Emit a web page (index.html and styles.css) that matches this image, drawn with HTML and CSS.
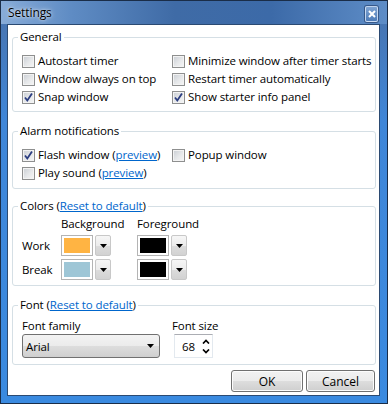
FILE: index.html
```html
<!DOCTYPE html>
<html lang="en">
<head>
  <meta charset="UTF-8" />
  <title>Settings</title>
  <link rel="stylesheet" href="styles.css">
</head>
<body>

<div class="window">
  <div class="titlebar">
    <span class="title">Settings</span>
    <span class="close">
      <svg width="8" height="8" viewBox="0 0 8 8"><path d="M1 1 L7 7 M7 1 L1 7" stroke="#fff" stroke-width="2" /></svg>
    </span>
  </div>

  <div class="client">

    <fieldset class="group general">
      <legend>General</legend>
      <div class="cols">
        <label class="check"><span class="box"></span>Autostart timer</label>
        <label class="check"><span class="box"></span>Minimize window after timer starts</label>
        <label class="check"><span class="box"></span>Window always on top</label>
        <label class="check"><span class="box"></span>Restart timer automatically</label>
        <label class="check"><span class="box on"><svg width="11" height="11" viewBox="0 0 11 11"><path d="M2 5.5 L4.3 8.5 L9 1.5" fill="none" stroke="#2b3d80" stroke-width="1.8" /></svg></span>Snap window</label>
        <label class="check"><span class="box on"><svg width="11" height="11" viewBox="0 0 11 11"><path d="M2 5.5 L4.3 8.5 L9 1.5" fill="none" stroke="#2b3d80" stroke-width="1.8" /></svg></span>Show starter info panel</label>
      </div>
    </fieldset>

    <fieldset class="group alarm">
      <legend>Alarm notifications</legend>
      <div class="cols">
        <label class="check"><span class="box on"><svg width="11" height="11" viewBox="0 0 11 11"><path d="M2 5.5 L4.3 8.5 L9 1.5" fill="none" stroke="#2b3d80" stroke-width="1.8" /></svg></span>Flash window (<a href="#">preview</a>)</label>
        <label class="check"><span class="box"></span>Popup window</label>
        <label class="check"><span class="box"></span>Play sound (<a href="#">preview</a>)</label>
      </div>
    </fieldset>

    <fieldset class="group colors">
      <legend>Colors (<a href="#">Reset to default</a>)</legend>
      <div class="color-grid">
        <span></span>
        <span class="head">Background</span>
        <span class="head">Foreground</span>

        <span class="row-label">Work</span>
        <div class="picker">
          <span class="swatch"><span class="fill orange"></span></span>
          <span class="drop"><svg width="7" height="4" viewBox="0 0 7 4"><path d="M0 0 H7 L3.5 4 Z" fill="#000" /></svg></span>
        </div>
        <div class="picker">
          <span class="swatch"><span class="fill black"></span></span>
          <span class="drop"><svg width="7" height="4" viewBox="0 0 7 4"><path d="M0 0 H7 L3.5 4 Z" fill="#000" /></svg></span>
        </div>

        <span class="row-label">Break</span>
        <div class="picker">
          <span class="swatch"><span class="fill blue"></span></span>
          <span class="drop"><svg width="7" height="4" viewBox="0 0 7 4"><path d="M0 0 H7 L3.5 4 Z" fill="#000" /></svg></span>
        </div>
        <div class="picker">
          <span class="swatch"><span class="fill black"></span></span>
          <span class="drop"><svg width="7" height="4" viewBox="0 0 7 4"><path d="M0 0 H7 L3.5 4 Z" fill="#000" /></svg></span>
        </div>
      </div>
    </fieldset>

    <fieldset class="group font">
      <legend>Font (<a href="#">Reset to default</a>)</legend>
      <div class="font-row">
        <div class="field">
          <span class="field-label">Font family</span>
          <div class="combo">
            <span>Arial</span>
            <svg width="7" height="4" viewBox="0 0 7 4"><path d="M0 0 H7 L3.5 4 Z" fill="#000" /></svg>
          </div>
        </div>
        <div class="field">
          <span class="field-label">Font size</span>
          <div class="spin">
            <span>68</span>
            <span class="arrows">
              <svg width="8" height="5" viewBox="0 0 8 5"><path d="M1 4.5 L4 1.5 L7 4.5" fill="none" stroke="#000" stroke-width="1.7" /></svg>
              <svg width="8" height="5" viewBox="0 0 8 5"><path d="M1 0.5 L4 3.5 L7 0.5" fill="none" stroke="#000" stroke-width="1.7" /></svg>
            </span>
          </div>
        </div>
      </div>
    </fieldset>

    <div class="buttons">
      <button class="ok">OK</button>
      <button class="cancel">Cancel</button>
    </div>

  </div>
</div>

</body>
</html>
```

FILE: styles.css
```css
* { box-sizing: border-box; }
body { margin: 0; width: 388px; height: 404px; overflow: hidden; font-family: "Open Sans", "Noto Sans", sans-serif; font-size: 11.5px; letter-spacing: -0.1px; color: #000; background: #fff; }

.window { width: 388px; height: 404px; border: 1px solid #1a2d48; padding: 0 7px 7px 6px; display: flex; flex-direction: column;
  background: linear-gradient(180deg, #4a78b4 0, #4776b4 24px, #3f86d8 120px, #3a8ae0 100%); }

.titlebar { height: 24px; display: flex; align-items: center; justify-content: space-between; margin: 0 -7px 0 -6px; padding-left: 7px; padding-right: 9px;
  background: linear-gradient(90deg, #88acd8 0, #5f8cc4 18%, #3f6ba6 45%, #3c6aa8 70%, #5e8dc7 100%); }
.title { font-size: 12px; line-height: 16px; text-shadow: 0 0 5px rgba(255,255,255,0.8), 0 0 2px rgba(255,255,255,0.6); }
.close { width: 13px; height: 16px; margin-top: 2px; border: 1px solid rgba(230,240,255,0.75); border-radius: 2px; display: flex; align-items: center; justify-content: center;
  background: linear-gradient(180deg, #7ea3d2, #4e7cb8); box-shadow: 0 0 0 1px rgba(20,40,80,0.5); }

.client { flex: 1; background: #fff; border: 1px solid #2b4a72; padding: 4px 3px 3px 4px; display: flex; flex-direction: column; }

.group { margin: 0; min-width: 0; border: 1px solid #d5dfe5; border-radius: 3px; padding: 7px 9px 5px; }
.group legend { font-size: 11.5px; line-height: 16px; padding: 0 2px; margin-left: -4px; }
.alarm { margin-top: 11px; padding-bottom: 6px; }
.colors { margin-top: 9px; padding-top: 2px; }
.font { margin-top: 11px; padding-top: 5px; padding-bottom: 6px; }

a { color: #0066cc; text-decoration: underline; }

.cols { display: grid; grid-template-columns: 150px auto; }
.check { display: flex; align-items: center; height: 18px; line-height: 16px; white-space: nowrap; }
.box { width: 13px; height: 13px; margin-right: 3px; border: 1px solid #8e8f8f; display: flex; align-items: center; justify-content: center; flex: none;
  background: linear-gradient(135deg, #c9cdd3 0%, #e6e8ea 55%, #f6f6f6 100%); box-shadow: inset 0 0 0 1px #f3f3f3; }

.color-grid { display: grid; grid-template-columns: 39px 76px auto; row-gap: 3px; align-items: center; }
.head { line-height: 16px; }
.row-label { line-height: 16px; }
.picker { display: flex; gap: 2px; height: 21px; }
.swatch { width: 32px; height: 21px; border: 1px solid #b4b4b4; padding: 2px; background: #fff; }
.fill { display: block; width: 100%; height: 100%; }
.orange { background: #ffb443; }
.blue { background: #9ec6d6; }
.black { background: #000; }
.drop { width: 16px; height: 21px; border: 1px solid #c8c8c8; border-radius: 2px; display: flex; align-items: center; justify-content: center;
  background: linear-gradient(180deg, #f6f6f6 0, #ececec 50%, #dcdcdc 51%, #d2d2d2 100%); }

.font-row { display: flex; gap: 12px; }
.field { display: flex; flex-direction: column; }
.field-label { line-height: 16px; }
.combo { width: 138px; height: 24px; border: 1px solid #707070; border-radius: 3px; display: flex; align-items: center; justify-content: space-between; padding: 0 5px 0 3px;
  background: linear-gradient(180deg, #f3f3f3 0, #ebebeb 50%, #dddddd 51%, #cfcfcf 100%); }
.spin { width: 39px; height: 24px; margin-left: 2px; border: 1px solid #e3e9ef; border-top-color: #abadb3; display: flex; align-items: center; justify-content: space-between; padding: 0 2px 0 7px; }
.arrows { display: flex; flex-direction: column; gap: 5px; }
.arrows svg { display: block; }

.buttons { margin-top: 5px; display: flex; justify-content: flex-end; gap: 3px; padding-right: 1px; }
.buttons button { height: 22px; font-family: inherit; font-size: 12px; color: #000; border: 1px solid #707070; border-radius: 3px; padding: 0;
  background: linear-gradient(180deg, #f2f2f2 0, #ebebeb 50%, #dddddd 51%, #cfcfcf 100%); box-shadow: inset 0 0 0 1px #fcfcfc; }
.ok { width: 72px; }
.cancel { width: 69px; }
```
